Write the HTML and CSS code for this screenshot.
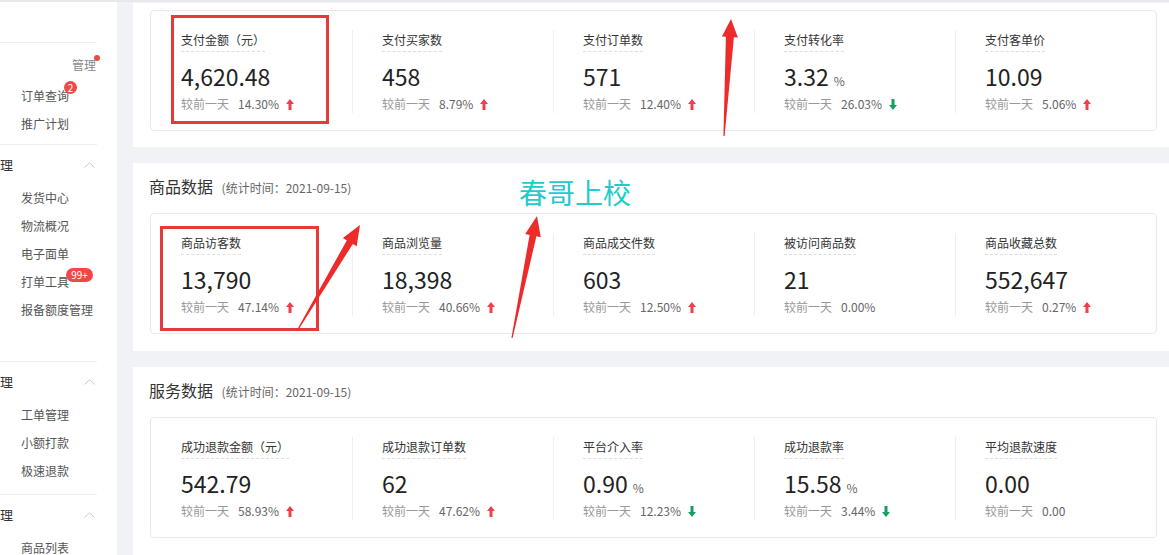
FILE: index.html
```html
<!DOCTYPE html>
<html lang="zh-CN">
<head>
    <meta charset="UTF-8">
    <meta name="viewport" content="width=device-width, initial-scale=1.0">
    <title>数据概况</title>
    <link rel="stylesheet" href="styles.css">
</head>
<body>
    <div class="page">
        <aside class="sidebar">
            <div class="menu">
                <div class="menu-head"></div>

                <div class="menu-group group-top">
                    <div class="menu-more">管理<i class="dot"></i></div>
                    <a class="menu-item">订单查询<i class="badge">2</i></a>
                    <a class="menu-item">推广计划</a>
                </div>

                <div class="menu-group group-tall">
                    <div class="menu-title">
                        <span>理</span>
                        <svg class="chevron" width="11" height="6" viewBox="0 0 11 6"><polyline points="0.5,5.5 5.5,0.8 10.5,5.5" fill="none" stroke="#c8c8c8" stroke-width="1"/></svg>
                    </div>
                    <a class="menu-item">发货中心</a>
                    <a class="menu-item">物流概况</a>
                    <a class="menu-item">电子面单</a>
                    <a class="menu-item">打单工具<i class="badge badge-pill">99+</i></a>
                    <a class="menu-item">报备额度管理</a>
                </div>

                <div class="menu-group">
                    <div class="menu-title">
                        <span>理</span>
                        <svg class="chevron" width="11" height="6" viewBox="0 0 11 6"><polyline points="0.5,5.5 5.5,0.8 10.5,5.5" fill="none" stroke="#c8c8c8" stroke-width="1"/></svg>
                    </div>
                    <a class="menu-item">工单管理</a>
                    <a class="menu-item">小额打款</a>
                    <a class="menu-item">极速退款</a>
                </div>

                <div class="menu-group">
                    <div class="menu-title">
                        <span>理</span>
                        <svg class="chevron" width="11" height="6" viewBox="0 0 11 6"><polyline points="0.5,5.5 5.5,0.8 10.5,5.5" fill="none" stroke="#c8c8c8" stroke-width="1"/></svg>
                    </div>
                    <a class="menu-item">商品列表</a>
                </div>
            </div>
        </aside>

        <main class="main">
            <section class="panel panel-first">
                <div class="card">
                    <div class="stat">
                        <span class="stat-label">支付金额（元）</span>
                        <div class="stat-value">4,620.48</div>
                        <div class="stat-cmp">较前一天<span class="rate">14.30%</span><svg class="trend" width="8" height="11" viewBox="0 0 8 11"><polygon points="4,0 8,5 5.5,5 5.5,11 2.5,11 2.5,5 0,5" fill="#f1404b"/></svg></div>
                    </div>
                    <div class="stat">
                        <span class="stat-label">支付买家数</span>
                        <div class="stat-value">458</div>
                        <div class="stat-cmp">较前一天<span class="rate">8.79%</span><svg class="trend" width="8" height="11" viewBox="0 0 8 11"><polygon points="4,0 8,5 5.5,5 5.5,11 2.5,11 2.5,5 0,5" fill="#f1404b"/></svg></div>
                    </div>
                    <div class="stat">
                        <span class="stat-label">支付订单数</span>
                        <div class="stat-value">571</div>
                        <div class="stat-cmp">较前一天<span class="rate">12.40%</span><svg class="trend" width="8" height="11" viewBox="0 0 8 11"><polygon points="4,0 8,5 5.5,5 5.5,11 2.5,11 2.5,5 0,5" fill="#f1404b"/></svg></div>
                    </div>
                    <div class="stat">
                        <span class="stat-label">支付转化率</span>
                        <div class="stat-value">3.32<span class="unit">%</span></div>
                        <div class="stat-cmp">较前一天<span class="rate">26.03%</span><svg class="trend" width="8" height="11" viewBox="0 0 8 11"><polygon points="4,11 8,6 5.5,6 5.5,0 2.5,0 2.5,6 0,6" fill="#17a05d"/></svg></div>
                    </div>
                    <div class="stat">
                        <span class="stat-label">支付客单价</span>
                        <div class="stat-value">10.09</div>
                        <div class="stat-cmp">较前一天<span class="rate">5.06%</span><svg class="trend" width="8" height="11" viewBox="0 0 8 11"><polygon points="4,0 8,5 5.5,5 5.5,11 2.5,11 2.5,5 0,5" fill="#f1404b"/></svg></div>
                    </div>
                </div>
            </section>

            <section class="panel">
                <div class="panel-head">
                    <span class="panel-title">商品数据</span>
                    <span class="panel-sub">(统计时间：2021-09-15)</span>
                </div>
                <div class="card">
                    <div class="stat">
                        <span class="stat-label">商品访客数</span>
                        <div class="stat-value">13,790</div>
                        <div class="stat-cmp">较前一天<span class="rate">47.14%</span><svg class="trend" width="8" height="11" viewBox="0 0 8 11"><polygon points="4,0 8,5 5.5,5 5.5,11 2.5,11 2.5,5 0,5" fill="#f1404b"/></svg></div>
                    </div>
                    <div class="stat">
                        <span class="stat-label">商品浏览量</span>
                        <div class="stat-value">18,398</div>
                        <div class="stat-cmp">较前一天<span class="rate">40.66%</span><svg class="trend" width="8" height="11" viewBox="0 0 8 11"><polygon points="4,0 8,5 5.5,5 5.5,11 2.5,11 2.5,5 0,5" fill="#f1404b"/></svg></div>
                    </div>
                    <div class="stat">
                        <span class="stat-label">商品成交件数</span>
                        <div class="stat-value">603</div>
                        <div class="stat-cmp">较前一天<span class="rate">12.50%</span><svg class="trend" width="8" height="11" viewBox="0 0 8 11"><polygon points="4,0 8,5 5.5,5 5.5,11 2.5,11 2.5,5 0,5" fill="#f1404b"/></svg></div>
                    </div>
                    <div class="stat">
                        <span class="stat-label">被访问商品数</span>
                        <div class="stat-value">21</div>
                        <div class="stat-cmp">较前一天<span class="rate">0.00%</span></div>
                    </div>
                    <div class="stat">
                        <span class="stat-label">商品收藏总数</span>
                        <div class="stat-value">552,647</div>
                        <div class="stat-cmp">较前一天<span class="rate">0.27%</span><svg class="trend" width="8" height="11" viewBox="0 0 8 11"><polygon points="4,0 8,5 5.5,5 5.5,11 2.5,11 2.5,5 0,5" fill="#f1404b"/></svg></div>
                    </div>
                </div>
            </section>

            <section class="panel">
                <div class="panel-head">
                    <span class="panel-title">服务数据</span>
                    <span class="panel-sub">(统计时间：2021-09-15)</span>
                </div>
                <div class="card">
                    <div class="stat">
                        <span class="stat-label">成功退款金额（元）</span>
                        <div class="stat-value">542.79</div>
                        <div class="stat-cmp">较前一天<span class="rate">58.93%</span><svg class="trend" width="8" height="11" viewBox="0 0 8 11"><polygon points="4,0 8,5 5.5,5 5.5,11 2.5,11 2.5,5 0,5" fill="#f1404b"/></svg></div>
                    </div>
                    <div class="stat">
                        <span class="stat-label">成功退款订单数</span>
                        <div class="stat-value">62</div>
                        <div class="stat-cmp">较前一天<span class="rate">47.62%</span><svg class="trend" width="8" height="11" viewBox="0 0 8 11"><polygon points="4,0 8,5 5.5,5 5.5,11 2.5,11 2.5,5 0,5" fill="#f1404b"/></svg></div>
                    </div>
                    <div class="stat">
                        <span class="stat-label">平台介入率</span>
                        <div class="stat-value">0.90<span class="unit">%</span></div>
                        <div class="stat-cmp">较前一天<span class="rate">12.23%</span><svg class="trend" width="8" height="11" viewBox="0 0 8 11"><polygon points="4,11 8,6 5.5,6 5.5,0 2.5,0 2.5,6 0,6" fill="#17a05d"/></svg></div>
                    </div>
                    <div class="stat">
                        <span class="stat-label">成功退款率</span>
                        <div class="stat-value">15.58<span class="unit">%</span></div>
                        <div class="stat-cmp">较前一天<span class="rate">3.44%</span><svg class="trend" width="8" height="11" viewBox="0 0 8 11"><polygon points="4,11 8,6 5.5,6 5.5,0 2.5,0 2.5,6 0,6" fill="#17a05d"/></svg></div>
                    </div>
                    <div class="stat">
                        <span class="stat-label">平均退款速度</span>
                        <div class="stat-value">0.00</div>
                        <div class="stat-cmp">较前一天<span class="rate">0.00</span></div>
                    </div>
                </div>
            </section>
        </main>
    </div>

    <!-- hand-drawn annotations over the screenshot -->
    <div class="mark mark-one"></div>
    <div class="mark mark-two"></div>
    <div class="note">春哥上校</div>
    <svg class="arrows" width="1169" height="555" viewBox="0 0 1169 555">
        <polygon points="731,19 737.9,37.5 733.9,37.2 724.6,136 723.4,136 725.9,36.8 721.9,36.5" fill="#ee2b2b"/>
        <polygon points="360,225 356.7,246.3 352.8,244 297.5,331.3 296.5,330.7 346.8,240.4 342.9,238.1" fill="#ee2b2b"/>
        <polygon points="537,216 540.8,237.2 536.4,236.3 512.6,338.1 511.4,337.9 529.6,234.9 525.2,234" fill="#ee2b2b"/>
    </svg>
</body>
</html>
```

FILE: styles.css
```css
body {
    margin: 0;
    position: relative;
    font-family: "Microsoft YaHei", "Noto Sans CJK SC", sans-serif;
    background: #f0f2f5;
    color: #333;
    overflow: hidden;
}
.page {
    display: flex;
    min-height: 553px;
    border-top: 2px solid #e6e8ec;
}

/* sidebar */
.sidebar {
    width: 117px;
    flex: none;
    background: #fff;
    overflow: hidden;
}
.menu {
    width: 97px;
}
.menu-head {
    height: 40px;
    border-bottom: 1px solid #eee;
}
.menu-group {
    border-bottom: 1px solid #eee;
    padding-bottom: 9px;
}
.group-top {
    padding-top: 8px;
    padding-bottom: 6px;
}
.group-tall {
    padding-bottom: 37px;
}
.menu-more {
    position: relative;
    height: 31px;
    line-height: 28px;
    font-size: 12px;
    color: #888;
    text-align: right;
    padding-right: 1px;
}
.dot {
    position: absolute;
    left: 94px;
    top: 4px;
    width: 6px;
    height: 6px;
    border-radius: 50%;
    background: #f04845;
}
.menu-title {
    height: 39px;
    display: flex;
    align-items: center;
    justify-content: space-between;
    font-size: 13px;
    color: #333;
}
.chevron {
    margin-right: 2px;
}
.menu-item {
    position: relative;
    display: block;
    height: 28px;
    line-height: 28px;
    padding-left: 21px;
    font-size: 12px;
    color: #555;
    white-space: nowrap;
}
.badge {
    position: absolute;
    left: 64px;
    top: -1px;
    width: 13px;
    height: 13px;
    border-radius: 50%;
    background: #f04845;
    color: #fff;
    font-style: normal;
    font-size: 10px;
    line-height: 13px;
    text-align: center;
}
.badge-pill {
    left: 66px;
    top: 0;
    width: 27px;
    height: 14px;
    line-height: 14px;
    border-radius: 7px;
}

/* main */
.main {
    flex: 1;
    min-width: 0;
    padding: 1px 0 0 16px;
    display: flex;
    flex-direction: column;
    gap: 16px;
}
.panel {
    background: #fff;
    padding: 0 12px 17px 17px;
}
.panel-first {
    padding-top: 7px;
    padding-bottom: 16px;
}
.panel-head {
    height: 50px;
    line-height: 46px;
    margin-left: -1px;
}
.panel-title {
    font-size: 16px;
    color: #333;
}
.panel-sub {
    font-size: 12px;
    color: #666;
    margin-left: 5px;
}
.card {
    display: grid;
    grid-template-columns: repeat(5, 1fr);
    border: 1px solid #e9e9e9;
    border-radius: 4px;
    padding: 19px 0 17px;
}
.stat {
    padding-left: 30px;
}
.stat + .stat {
    border-left: 1px solid #eee;
    padding-left: 29px;
}
.stat-label {
    display: block;
    width: fit-content;
    font-size: 12px;
    line-height: 20px;
    padding-bottom: 1px;
    border-bottom: 1px dashed #ddd;
    color: #333;
}
.stat-value {
    margin-top: 8px;
    height: 32px;
    font-size: 23px;
    line-height: 32px;
    color: #222;
}
.unit {
    font-size: 12px;
    line-height: 1;
    color: #666;
    margin-left: 5px;
}
.stat-cmp {
    margin-top: 3px;
    display: flex;
    align-items: center;
    font-size: 12px;
    line-height: 18px;
    color: #999;
}
.rate {
    margin-left: 9px;
    color: #666;
}
.trend {
    margin-left: 7px;
}

/* annotations */
.mark {
    position: absolute;
    box-sizing: border-box;
    border: 3px solid #e63a3a;
}
.mark-one {
    left: 171px;
    top: 15px;
    width: 158px;
    height: 109px;
}
.mark-two {
    left: 160px;
    top: 226px;
    width: 159px;
    height: 105px;
}
.note {
    position: absolute;
    left: 519px;
    top: 172px;
    font-size: 28px;
    line-height: 40px;
    color: #22cbcb;
}
.arrows {
    position: absolute;
    left: 0;
    top: 0;
    pointer-events: none;
}
```
